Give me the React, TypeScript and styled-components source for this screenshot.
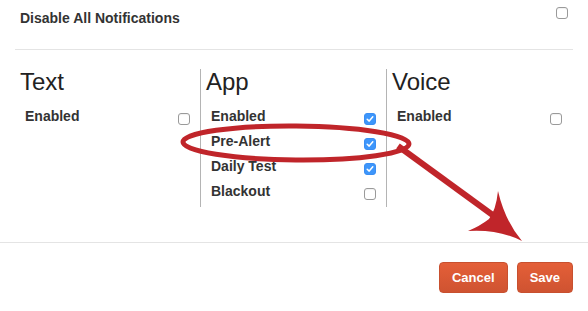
import React from 'react';
import styled, { createGlobalStyle } from 'styled-components';

const GlobalStyle = createGlobalStyle`
  * { box-sizing: border-box; }
  body {
    margin: 0;
    background: #ffffff;
    font-family: "Liberation Sans", Arial, Helvetica, sans-serif;
    color: #333333;
  }
`;

// --- Layout ---
const Page = styled.div`
  position: relative;
  width: 588px;
  height: 311px;
  overflow: hidden;
`;

const Header = styled.div`
  height: 49px;
  display: flex;
  justify-content: space-between;
  align-items: flex-start;
  padding: 7px 20px 0 20px;
`;

const HeaderLabel = styled.span`
  margin-top: 2px;
  font-size: 14px;
  line-height: 18px;
  font-weight: bold;
  color: #333333;
`;

const Rule = styled.hr<{ $inset?: boolean }>`
  margin: 0 ${p => (p.$inset ? '15px' : '0')};
  border: 0;
  border-top: 1px solid #e4e4e4;
`;

const Columns = styled.div`
  display: grid;
  grid-template-columns: 185px 186px 186px;
  margin: 19px 15px 36px 15px;
  height: 137px;
`;

const Column = styled.div<{ $divided?: boolean }>`
  border-left: ${p => (p.$divided ? '1px solid #b4b4b4' : 'none')};
  padding: 0 10px 0 0;
`;

const ColumnTitle = styled.h2`
  margin: 0 0 12px 5px;
  font-size: 24px;
  line-height: 26px;
  font-weight: normal;
  color: #222222;
`;

const Row = styled.div`
  height: 25px;
  display: flex;
  justify-content: space-between;
  align-items: flex-start;
  padding-left: 10px;
`;

const RowLabel = styled.span`
  font-size: 14px;
  line-height: 18px;
  font-weight: bold;
  color: #333333;
`;

const Footer = styled.div`
  display: flex;
  justify-content: flex-end;
  gap: 9px;
  padding: 19px 15px 0 0;
`;

const Button = styled.button`
  height: 31px;
  padding: 0 12px;
  border: 1px solid #c8502f;
  border-radius: 4px;
  background: linear-gradient(#e45f38, #cf5331);
  color: #ffffff;
  font-family: "Liberation Sans", Arial, sans-serif;
  font-size: 13px;
  font-weight: bold;
  cursor: pointer;
`;

// --- Checkbox ---
const Box = styled.span<{ $checked?: boolean; $offset: number }>`
  display: inline-flex;
  align-items: center;
  justify-content: center;
  width: 12px;
  height: 12px;
  margin-top: ${p => p.$offset}px;
  border-radius: 3px;
  border: 1px solid ${p => (p.$checked ? '#3a8ef3' : '#9a9a9a')};
  background: ${p => (p.$checked ? '#3d96fb' : '#ffffff')};
  box-shadow: ${p => (p.$checked ? 'none' : 'inset 0 1px 1px rgba(0,0,0,0.06)')};
`;

const Checkbox: React.FC<{ checked?: boolean; offset?: number }> = ({ checked, offset = 6 }) => (
  <Box $checked={checked} $offset={offset}>
    {checked && (
      <svg width="8" height="8" viewBox="0 0 8 8">
        <path d="M1.2 4.2 L3.2 6.1 L6.8 1.8" fill="none" stroke="#ffffff" strokeWidth="1.5" strokeLinecap="round" strokeLinejoin="round" />
      </svg>
    )}
  </Box>
);

// --- Annotation overlay ---
const Overlay = styled.svg`
  position: absolute;
  left: 0;
  top: 0;
  pointer-events: none;
`;

const columns = [
  { title: 'Text', rows: [{ label: 'Enabled', checked: false }] },
  {
    title: 'App',
    rows: [
      { label: 'Enabled', checked: true },
      { label: 'Pre-Alert', checked: true },
      { label: 'Daily Test', checked: true },
      { label: 'Blackout', checked: false },
    ],
  },
  { title: 'Voice', rows: [{ label: 'Enabled', checked: false }] },
];

export default function App() {
  return (
    <Page>
      <GlobalStyle />
      <Header>
        <HeaderLabel>Disable All Notifications</HeaderLabel>
        <Checkbox offset={0} />
      </Header>
      <Rule $inset />
      <Columns>
        {columns.map((col, i) => (
          <Column key={col.title} $divided={i > 0}>
            <ColumnTitle>{col.title}</ColumnTitle>
            {col.rows.map(r => (
              <Row key={r.label}>
                <RowLabel>{r.label}</RowLabel>
                <Checkbox checked={r.checked} />
              </Row>
            ))}
          </Column>
        ))}
      </Columns>
      <Rule />
      <Footer>
        <Button>Cancel</Button>
        <Button>Save</Button>
      </Footer>

      <Overlay width="588" height="311" viewBox="0 0 588 311">
        <ellipse cx="296" cy="143" rx="113" ry="17" fill="none" stroke="#c0252a" strokeWidth="5" transform="rotate(0.5 296 143)" />
        <line x1="398" y1="146" x2="505" y2="224" stroke="#c0252a" strokeWidth="6" />
        <path d="M522 241 Q505 221 498 191 Q496 210 489 219 Q480 226 468 231 Q498 229 522 241 Z" fill="#c0252a" />
      </Overlay>
    </Page>
  );
}
